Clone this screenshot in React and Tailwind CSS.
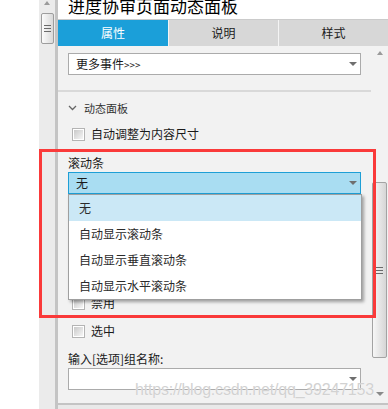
import React from "react";

function Arrow({ dir = "down", color = "border-t-[#6f6f6f]" }) {
  if (dir === "up") {
    return (
      <div className="w-0 h-0 border-l-[3.5px] border-r-[3.5px] border-b-[4px] border-l-transparent border-r-transparent border-b-[#9a9a9a]" />
    );
  }
  return (
    <div className={`w-0 h-0 border-l-[4px] border-r-[4px] border-t-[4px] border-l-transparent border-r-transparent ${color}`} />
  );
}

function Select({ text, active }) {
  return (
    <div
      className={
        "ml-[10px] w-[293px] h-[22px] flex items-center justify-between pl-[7px] pr-[3px] border " +
        (active ? "bg-[#a9ddf2] border-[#1e9fd6]" : "bg-white border-[#ababab]")
      }
    >
      <span className="text-[12px] leading-[16px] text-[#1a1a1a]">{text}</span>
      <Arrow />
    </div>
  );
}

function Check({ label }) {
  return (
    <div className="ml-[14px] h-[20px] flex items-center gap-[6px]">
      <div className="w-[13px] h-[13px] border border-[#b4b4b4] bg-white p-[1px]">
        <div className="w-full h-full bg-linear-to-br from-[#c9c9c9] to-[#f6f6f6]" />
      </div>
      <span className="text-[12px] leading-[16px] text-[#1a1a1a]">{label}</span>
    </div>
  );
}

function Grip() {
  return (
    <div className="flex flex-col gap-[2px]">
      <div className="w-[7px] h-[1px] bg-[#6a6a6a]" />
      <div className="w-[7px] h-[1px] bg-[#6a6a6a]" />
      <div className="w-[7px] h-[1px] bg-[#6a6a6a]" />
    </div>
  );
}

export default function App() {
  return (
    <div className="relative w-[388px] h-[409px] overflow-hidden bg-white flex font-['Noto_Sans_CJK_SC','Microsoft_YaHei',sans-serif]">
      <div className="w-[39px] shrink-0 bg-white" />
      {/* left scrollbar strip */}
      <div className="w-[16px] shrink-0 bg-[#ebebeb] flex flex-col items-center">
        <div className="mt-[1px]">
          <Arrow dir="up" />
        </div>
        <div className="mt-[8px] w-[13px] h-[31px] rounded-[2px] border border-[#9d9d9d] bg-linear-to-r from-[#fbfbfb] to-[#d9d9d9] flex items-center justify-center">
          <Grip />
        </div>
      </div>
      {/* panel */}
      <div className="w-[333px] shrink-0 border-l-[3px] border-[#c4c4c4] flex flex-col">
        <div className="h-[20px] bg-white border-b border-[#cbcbcb] overflow-hidden pl-[10px]">
          <div className="text-[17px] leading-[17px] -mt-[3px] text-black whitespace-nowrap">进度协审页面动态面板</div>
        </div>
        <div className="h-[26px] flex text-[12px]">
          <div className="w-[110px] bg-[#1b9fd9] text-white flex items-center justify-center">属性</div>
          <div className="w-[110px] bg-[#d7d7d7] border-l border-[#f4f4f4] text-[#1a1a1a] flex items-center justify-center">说明</div>
          <div className="w-[110px] bg-[#d7d7d7] border-l border-[#f4f4f4] text-[#1a1a1a] flex items-center justify-center">样式</div>
        </div>
        <div className="h-[357px] flex bg-[#f2f2f2]">
          <div className="w-[313px] flex flex-col">
            <div className="mt-[7px]">
              <Select text={<span>更多事件<span className="text-[10px]">&gt;&gt;&gt;</span></span>} />
            </div>
            <div className="mt-[15px] h-[2px] bg-[#d9d9d9]" />
            <div className="mt-[6px] h-[20px] ml-[10px] flex items-center gap-[7px]">
              <svg width="9" height="6" viewBox="0 0 9 6">
                <polyline points="1,1 4.5,4.5 8,1" fill="none" stroke="#666" strokeWidth="1.3" />
              </svg>
              <span className="text-[11px] leading-[16px] text-[#333]">动态面板</span>
            </div>
            <div className="mt-[6px]">
              <Check label="自动调整为内容尺寸" />
            </div>
            <div className="mt-[11px] ml-[10px] h-[16px] text-[12px] leading-[16px] text-[#1a1a1a]">滚动条</div>
            <div className="mt-[1px]">
              <Select text="无" active />
            </div>
            <div className="mt-[99px]">
              <Check label="禁用" />
            </div>
            <div className="mt-[8px]">
              <Check label="选中" />
            </div>
            <div className="mt-[10px] ml-[10px] h-[16px] text-[12px] leading-[16px] text-[#1a1a1a]">输入[选项]组名称:</div>
            <div className="mt-[1px]">
              <Select text="" />
            </div>
          </div>
          {/* right scrollbar */}
          <div className="w-[17px] flex flex-col items-center">
            <div className="mt-[5px]">
              <Arrow dir="up" />
            </div>
            <div className="mt-[127px] w-[15px] h-[176px] rounded-[2px] border border-[#a3a3a3] bg-linear-to-r from-[#f7f7f7] to-[#d6d6d6] flex items-center justify-center">
              <Grip />
            </div>
            <div className="mt-[34px]">
              <Arrow color="border-t-[#8a8a8a]" />
            </div>
          </div>
        </div>
        <div className="h-[2px] bg-[#c4c4c4]" />
        <div className="flex-1 bg-[#e9e9e9]" />
      </div>

      {/* dropdown list overlay */}
      <div className="absolute left-[68px] top-[194px] w-[294px] border border-[#9f9f9f] bg-white shadow-[2px_2px_3px_rgba(0,0,0,0.35)]">
        {["无", "自动显示滚动条", "自动显示垂直滚动条", "自动显示水平滚动条"].map((t, i) => (
          <div
            key={t}
            className={"h-[26px] flex items-center pl-[10px] text-[12px] text-[#2a2a2a] " + (i === 0 ? "bg-[#cbe8f6]" : "")}
          >
            {t}
          </div>
        ))}
      </div>

      {/* red annotation box */}
      <div className="absolute left-[39px] top-[149px] w-[337px] h-[169px] border-[3px] border-[#fa3a3a]" />

      {/* watermark */}
      <div className="absolute left-[135px] top-[382px] text-[16px] leading-[16px] tracking-[-0.2px] font-['Liberation_Sans',sans-serif] text-[#d2d2d2] whitespace-nowrap [text-shadow:0_0_1px_#ffffff]">
        https://blog.csdn.net/qq_39247153
      </div>
    </div>
  );
}
